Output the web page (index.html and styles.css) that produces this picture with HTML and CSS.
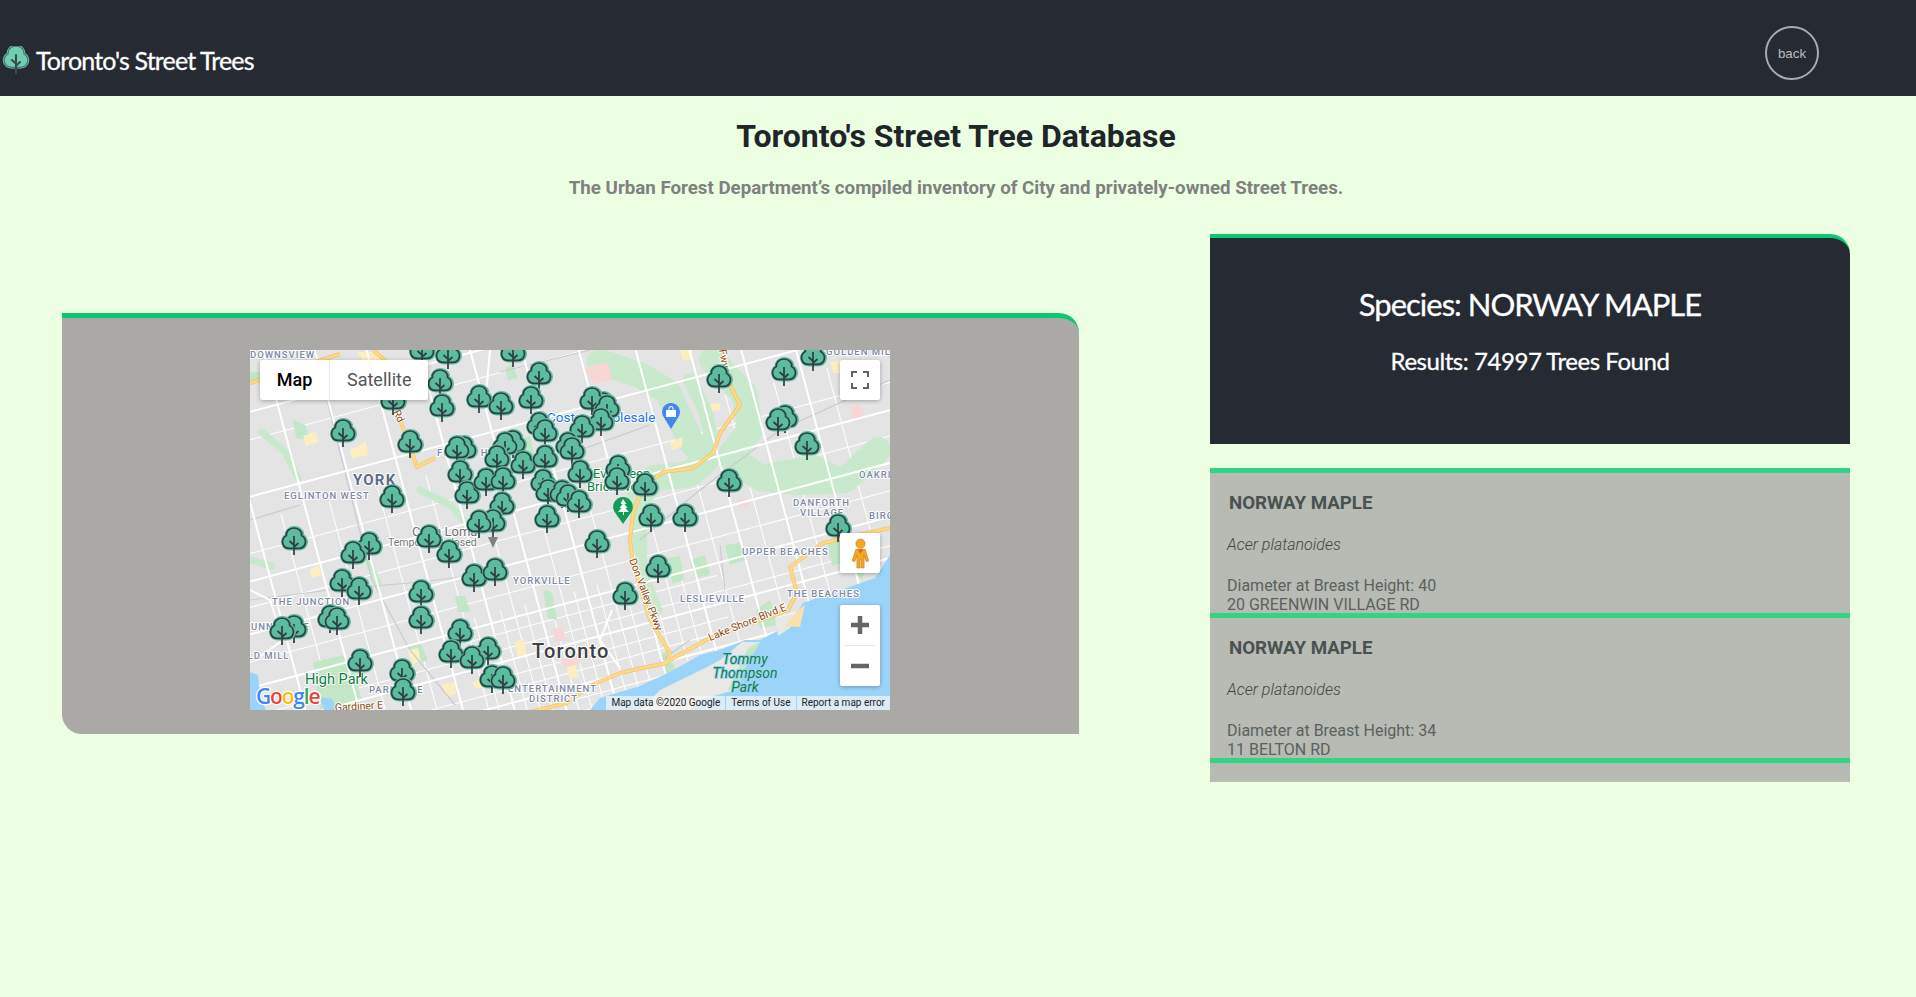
FILE: index.html
```html
<!DOCTYPE html>
<html lang="en">
<head>
<meta charset="utf-8">
<title>Toronto's Street Trees</title>
<link rel="stylesheet" href="styles.css">
</head>
<body>
<svg class="defs" width="0" height="0" aria-hidden="true">
  <defs>
    <path id="crown" d="M0-27C-5-27-8.3-23-7.6-19.4-11-17.8-12.2-14-11-10.9-10-8-7.3-6.6-4.4-6.6H4.4C7.3-6.6 10-8 11-10.9 12.2-14 11-17.8 7.6-19.4 8.3-23 5-27 0-27Z"/>
    <g id="t">
      <use href="#crown" class="tree-halo" x="0.5"/>
      <use href="#crown" class="tree-line"/>
      <path class="tree-line" d="M0-19V0M0-10-4.500-14M0-8 4.500-12"/>
    </g>
  </defs>
</svg>

<header class="topbar">
  <div class="brand">
    <svg class="brand-icon" viewBox="-13.500 -27 27 27" width="28" height="28">
      <use href="#crown" class="logo-crown"/>
      <use href="#crown" class="logo-outline"/>
      <path class="logo-line" d="M0-19V0M0-10-4.500-14M0-8 4.500-12"/>
    </svg>
    <span class="brand-name">Toronto's Street Trees</span>
  </div>
  <button class="back-btn" type="button">back</button>
</header>

<main>
  <section class="intro">
    <h1>Toronto's Street Tree Database</h1>
    <p>The Urban Forest Department’s compiled inventory of City and privately-owned Street Trees.</p>
  </section>

  <div class="columns">
    <section class="map-card">
      <div class="map">
        <svg class="map-svg" viewBox="250 350 640 360" width="640" height="360">
          <rect x="250" y="350" width="640" height="360" class="m-land"/>

          <!-- minor streets -->
          <g class="m-minor" transform="rotate(-15 570 530)">
            <path d="M100 360H1050M100 470H1050M100 522H1050M100 575H1050"/>
            <path d="M295 440V950M345 440V950M395 440V950M445 440V950M495 500V950M545 500V950M595 500V950M650 500V950M705 440V950M755 440V950M805 440V950M860 440V950"/>
            <path d="M100 628H1050M100 668H1050M100 708H1050M100 750H900"/>
            <path d="M455 590V800M482 590V800M507 590V800M532 590V800M558 590V800M582 590V800M608 590V800M635 590V800M665 590V800"/>
            <path d="M440 612H700M440 655H700M440 695H700M440 735H700"/>
          </g>

          <!-- parks and valleys -->
          <g class="m-valley">
            <path class="v-wide" d="M600 362 640 375 668 392 690 440 706 460 690 474 655 478 640 495"/>
            <path class="v-wide" d="M712 360 745 395 750 430 730 456 760 478 800 482 845 480 878 450"/>
            <path class="v-mid" d="M640 495 640 530 640 570 655 610"/>
            <path class="v-mid" d="M690 380 705 410 712 440"/>
            <path class="v-mid" d="M770 470 815 462 838 474"/>
            <path class="v-thin" d="M262 432 285 452 298 478"/>
            <path class="v-thin" d="M420 490 450 505 468 525"/>
            <path class="v-thin" d="M368 562 378 582"/>
            <path class="v-thin" d="M250 560 272 566"/>
          </g>
          <g class="m-green">
            <path d="M313 662 345 655 355 672 363 706 320 710Z"/>
            <path d="M250 372 262 372 265 380 250 385Z"/>
            <path d="M293 420 305 425 310 440 296 438Z"/>
            <path d="M455 596 465 596 470 612 458 612Z"/>
            <path d="M543 590 552 592 557 620 548 618Z"/>
            <path d="M408 646 420 642 428 660 416 664Z"/>
            <path d="M668 558 680 556 684 580 672 584Z"/>
            <path d="M725 545 740 543 745 560 730 565Z"/>
            <path d="M756 610 770 600 778 625 760 628Z"/>
            <path d="M853 570 870 560 862 580Z"/>
            <path d="M660 655 668 650 676 670 664 675Z"/>
            <path d="M828 545 838 535 850 560 832 566Z"/>
            <path d="M505 368 512 364 518 378 508 380Z"/>
            <path d="M520 440 530 436 536 462 526 464Z"/>
            <path d="M690 560 705 555 710 575 695 578Z"/>
          </g>
          <g class="m-beige">
            <path d="M303 436 316 432 318 442 306 446Z"/>
            <path d="M350 450 366 442 368 455 352 458Z"/>
            <path d="M357 352 380 352 385 362 365 364Z"/>
            <path d="M680 350 693 350 690 360 682 360Z"/>
            <path d="M670 442 683 437 682 447 672 450Z"/>
            <path d="M710 404 720 403 720 410 712 411Z"/>
            <path d="M830 362 847 360 846 373 834 373Z"/>
            <path d="M408 650 418 648 421 662 412 664Z"/>
            <path d="M515 642 524 638 526 654 518 658Z"/>
            <path d="M442 684 454 682 456 694 446 697Z"/>
            <path d="M566 664 574 660 578 676 570 680Z"/>
            <path d="M472 682 484 678 487 686 476 689Z"/>
            <path d="M310 570 318 565 322 575 312 578Z"/>
          </g>
          <g class="m-pink">
            <path d="M584 368 608 362 612 380 594 384Z"/>
            <path d="M850 408 860 404 866 418 855 422Z"/>
            <path d="M738 500 746 498 748 506 740 508Z"/>
            <path d="M552 630 562 626 566 640 556 642Z"/>
            <path d="M560 660 578 654 582 662 566 668Z"/>
          </g>

          <!-- railway -->
          <path class="m-rail" d="M315 350 332 420 372 580 410 650 455 705M250 600 330 590 420 582 480 575M500 372 590 350M640 540 700 490 780 430 890 380M580 450 650 425M250 520 300 505M720 545 725 590M690 640 655 665"/>

          <!-- major streets -->
          <g class="m-major" transform="rotate(-15 570 530)">
            <path d="M100 333H1050M100 415H1050M100 497H1050M100 548H1050M100 600H1050M100 640H1050M100 682H1050M100 722H850"/>
            <path d="M268 100V950M320 100V950M370 100V950M420 100V950M470 100V950M520 100V950M570 100V950M625 100V470M625 560V950M680 100V950M732 100V950M782 100V950M835 100V950"/>
          </g>
          <path class="m-major" d="M250 590 270 600 283 640 262 655 250 660M490 350 486 395 500 410M620 668 600 640 612 610"/>

          <!-- lake -->
          <path class="m-water" d="M890 555 875 578 835 592 803 603 797 613 783 628 760 640 745 640 720 650 700 655 670 672 640 686 600 698 590 710H890Z"/>
          <path class="m-water" d="M250 672 258 675 260 695 266 710H250Z"/>
          <path class="m-water" d="M320 697 332 699 338 710H324Z"/>
          <path class="m-spit" d="M742 642 760 642 745 668 735 690 700 700 690 710H640L660 690 705 668 720 660Z"/>
          <path class="m-green-dark" d="M748 648 760 642 745 668 738 690 728 690Z"/>
          <path class="m-spit" d="M775 618 800 612 790 628 778 636Z"/>
          <path class="m-beige-d" d="M796 612 805 605 800 627 785 626Z"/>

          <!-- highways -->
          <g class="m-hwy-o">
            <path d="M722 350 730 385 740 405 720 433 713 453 693 468 663 472 643 487 633 513 630 540 633 563 650 620 670 653 667 663 647 667 620 673 587 687 567 703 530 712"/>
            <path d="M670 660 710 638 760 620 788 610 797 593 790 567 823 543 890 528"/>
            <path d="M250 383 340 354M373 350 387 362M397 412 410 447 417 467 435 458"/>
          </g>
          <g class="m-hwy">
            <path d="M722 350 730 385 740 405 720 433 713 453 693 468 663 472 643 487 633 513 630 540 633 563 650 620 670 653 667 663 647 667 620 673 587 687 567 703 530 712"/>
            <path d="M670 660 710 638 760 620 788 610 797 593 790 567 823 543 890 528"/>
            <path d="M250 383 340 354M373 350 387 362M397 412 410 447 417 467 435 458"/>
          </g>

          <!-- labels -->
          <g class="m-area">
            <text x="250" y="358">DOWNSVIEW</text>
            <text x="284" y="499">EGLINTON WEST</text>
            <text x="437" y="456">FOREST HILL</text>
            <text x="859" y="478">OAKRIDGE</text>
            <text x="793" y="506">DANFORTH</text>
            <text x="800" y="516">VILLAGE</text>
            <text x="869" y="519">BIRCH</text>
            <text x="826" y="355">GOLDEN MILL</text>
            <text x="742" y="555">UPPER BEACHES</text>
            <text x="680" y="602">LESLIEVILLE</text>
            <text x="787" y="597">THE BEACHES</text>
            <text x="513" y="584">YORKVILLE</text>
            <text x="272" y="605">THE JUNCTION</text>
            <text x="244" y="630">RUNNYMEDE</text>
            <text x="240" y="659">OLD MILL</text>
            <text x="369" y="693">PARKDALE</text>
            <text x="508" y="692">ENTERTAINMENT</text>
            <text x="529" y="702">DISTRICT</text>
          </g>
          <text class="m-york" x="353" y="485">YORK</text>
          <text class="m-poi-gray" x="412" y="536">Casa Loma</text>
          <text class="m-temp" x="388" y="546">Temporarily closed</text>
          <text class="m-blue" x="547" y="422">Costco Wholesale</text>
          <text class="m-park" x="593" y="478">Evergreen</text>
          <text class="m-park" x="587" y="491">Brick Works</text>
          <text class="m-park-l" x="305" y="684">High Park</text>
          <text class="m-toronto" x="532" y="658">Toronto</text>
          <g class="m-ital">
            <text x="745" y="664">Tommy</text>
            <text x="745" y="678">Thompson</text>
            <text x="745" y="692">Park</text>
          </g>
          <g class="m-road">
            <text transform="translate(629 560) rotate(69)">Don Valley Pkwy</text>
            <text transform="translate(710 641) rotate(-22)">Lake Shore Blvd E</text>
            <text transform="translate(393 412) rotate(65)">Rd</text>
            <text transform="translate(719 350) rotate(80)">Fwy</text>
            <text transform="translate(335 711) rotate(-3)">Gardiner E</text>
          </g>

          <!-- place pins -->
          <path class="pin-blue" d="M671 403a9 9 0 0 1 8 13l-8 13-8-13a9 9 0 0 1 8-13Z"/>
          <path class="pin-glyph" d="M666 410h10v7h-10ZM668.500 410v-1.500a2.500 2.500 0 0 1 5 0V410h-1v-1.500a1.500 1.500 0 0 0-3 0V410Z"/>
          <path class="pin-green" d="M623 497a10 10 0 0 1 9 14l-9 13-9-13a10 10 0 0 1 9-14Z"/>
          <path class="pin-glyph" d="M623 499l3.500 5h-2l3 4h-2l3.500 4h-5v3h-1v-3h-5l3.500-4h-2l3-4h-2Z"/>
          <path class="pin-gray" d="M488 537h10l-5 11Z"/>

          <!-- trees -->
          <g class="trees">
            <use href="#t" x="422" y="365"/><use href="#t" x="448" y="369"/><use href="#t" x="513" y="367"/>
            <use href="#t" x="539" y="390"/><use href="#t" x="393" y="415"/><use href="#t" x="440" y="397"/>
            <use href="#t" x="442" y="422"/><use href="#t" x="479" y="413"/><use href="#t" x="501" y="420"/>
            <use href="#t" x="531" y="414"/><use href="#t" x="343" y="447"/><use href="#t" x="410" y="458"/>
            <use href="#t" x="464" y="464"/><use href="#t" x="457" y="464"/><use href="#t" x="603" y="420"/>
            <use href="#t" x="592" y="415"/><use href="#t" x="607" y="423"/><use href="#t" x="601" y="436"/>
            <use href="#t" x="539" y="440"/><use href="#t" x="545" y="447"/><use href="#t" x="582" y="443"/>
            <use href="#t" x="513" y="458"/><use href="#t" x="505" y="460"/><use href="#t" x="568" y="460"/>
            <use href="#t" x="572" y="465"/><use href="#t" x="497" y="473"/><use href="#t" x="523" y="479"/>
            <use href="#t" x="545" y="473"/><use href="#t" x="460" y="488"/><use href="#t" x="467" y="509"/>
            <use href="#t" x="486" y="496"/><use href="#t" x="503" y="495"/><use href="#t" x="502" y="520"/>
            <use href="#t" x="543" y="497"/><use href="#t" x="548" y="507"/><use href="#t" x="562" y="508"/>
            <use href="#t" x="568" y="512"/><use href="#t" x="547" y="533"/><use href="#t" x="580" y="488"/>
            <use href="#t" x="579" y="518"/><use href="#t" x="618" y="483"/><use href="#t" x="617" y="495"/>
            <use href="#t" x="645" y="501"/><use href="#t" x="651" y="532"/><use href="#t" x="685" y="532"/>
            <use href="#t" x="719" y="393"/><use href="#t" x="784" y="386"/><use href="#t" x="813" y="371"/>
            <use href="#t" x="785" y="433"/><use href="#t" x="778" y="436"/><use href="#t" x="807" y="460"/>
            <use href="#t" x="729" y="497"/><use href="#t" x="838" y="542"/><use href="#t" x="392" y="513"/>
            <use href="#t" x="294" y="555"/><use href="#t" x="369" y="560"/><use href="#t" x="353" y="569"/>
            <use href="#t" x="342" y="597"/><use href="#t" x="359" y="605"/><use href="#t" x="421" y="608"/>
            <use href="#t" x="421" y="634"/><use href="#t" x="474" y="592"/><use href="#t" x="495" y="586"/>
            <use href="#t" x="449" y="568"/><use href="#t" x="429" y="553"/><use href="#t" x="493" y="537"/>
            <use href="#t" x="479" y="538"/><use href="#t" x="330" y="633"/><use href="#t" x="337" y="635"/>
            <use href="#t" x="294" y="643"/><use href="#t" x="282" y="645"/><use href="#t" x="460" y="647"/>
            <use href="#t" x="488" y="665"/><use href="#t" x="451" y="668"/><use href="#t" x="472" y="674"/>
            <use href="#t" x="492" y="693"/><use href="#t" x="503" y="694"/><use href="#t" x="360" y="677"/>
            <use href="#t" x="402" y="687"/><use href="#t" x="403" y="706"/><use href="#t" x="597" y="558"/>
            <use href="#t" x="658" y="583"/><use href="#t" x="625" y="610"/>
          </g>

          <!-- google logo -->
          <text class="m-google" x="256" y="704"><tspan class="g-b">G</tspan><tspan class="g-r">o</tspan><tspan class="g-y">o</tspan><tspan class="g-b">g</tspan><tspan class="g-g">l</tspan><tspan class="g-r">e</tspan></text>
        </svg>

        <div class="map-type">
          <span class="type-btn type-active">Map</span>
          <span class="type-btn">Satellite</span>
        </div>
        <button class="map-ctl fullscreen" type="button" aria-label="Toggle fullscreen">
          <svg viewBox="0 0 18 18" width="18" height="18"><path class="ctl-line" d="M1 6V1H6M12 1H17V6M17 12V17H12M6 17H1V12"/></svg>
        </button>
        <button class="map-ctl pegman" type="button" aria-label="Street View">
          <svg viewBox="0 0 18 30" width="19" height="31">
            <circle class="peg" cx="9" cy="5.500" r="4.500"/>
            <path class="peg" d="M4.500 11H13.500L17 22 14.500 23 12.500 17V29H9.500V21H8.500V29H5.500V17L3.500 23 1 22Z"/>
            <path class="peg-v" d="M6 11 9 15 12 11Z"/>
          </svg>
        </button>
        <div class="map-ctl zoom-ctl">
          <svg viewBox="0 0 40 81" width="40" height="81">
            <path class="zoom-mark" d="M20 11V29M11 20H29"/>
            <path class="zoom-sep" d="M5 40.500H35"/>
            <path class="zoom-mark" d="M11 61H29"/>
          </svg>
        </div>
        <div class="attribution">
          <span class="attr-data">Map data ©2020 Google</span>
          <span class="attr-terms">Terms of Use</span>
          <span class="attr-report">Report a map error</span>
        </div>
      </div>
    </section>

    <aside class="side">
      <section class="summary">
        <h2>Species: NORWAY MAPLE</h2>
        <h3>Results: 74997 Trees Found</h3>
      </section>
      <div class="results">
        <article class="tree-row">
          <h4>NORWAY MAPLE</h4>
          <p class="latin">Acer platanoides</p>
          <p class="facts">Diameter at Breast Height: 40<br>20 GREENWIN VILLAGE RD</p>
        </article>
        <article class="tree-row">
          <h4>NORWAY MAPLE</h4>
          <p class="latin">Acer platanoides</p>
          <p class="facts">Diameter at Breast Height: 34<br>11 BELTON RD</p>
        </article>
        <div class="results-end"></div>
      </div>
    </aside>
  </div>
</main>
</body>
</html>
```
FILE: styles.css
```css
* { box-sizing: border-box; }
html, body { margin: 0; padding: 0; }
body {
  background: #ecffe3;
  font-family: Roboto, "Liberation Sans", sans-serif;
  color: #212529;
  height: 997px;
  overflow: hidden;
}
.defs { position: absolute; }

.topbar {
  height: 96px;
  background: #262a32;
  display: flex;
  align-items: flex-start;
  justify-content: space-between;
  padding: 26px 97px 0 2px;
}
.brand { display: flex; align-items: center; gap: 6px; margin-top: 19px; }
.brand-icon { display: block; flex: none; }
.brand-name {
  font-family: Lato, "Open Sans", sans-serif;
  font-size: 25px;
  line-height: 30px;
  letter-spacing: -.85px;
  color: #fff;
  -webkit-text-stroke: .3px #fff;
}
.logo-crown { fill: #6fcfb0; stroke: #6fcfb0; stroke-width: 2.5; }
.logo-outline { fill: none; stroke: #47616a; stroke-width: 1; }
.logo-line { fill: none; stroke: #3a4a50; stroke-width: 2; }
.back-btn {
  width: 54px;
  height: 54px;
  border-radius: 50%;
  background: transparent;
  border: 2px solid #a9acae;
  color: #b9bcbe;
  font-family: "Liberation Sans", Arial, sans-serif;
  font-size: 13.33px;
  padding: 0;
}

.intro { text-align: center; padding: 21px 4px 0 0; }
.intro h1 {
  margin: 0;
  font-size: 32px;
  line-height: 38px;
  font-weight: 700;
  color: #212529;
}
.intro p {
  margin: 20px 0 0;
  font-size: 18.72px;
  line-height: 27px;
  font-weight: 700;
  color: #808080;
}

.columns {
  display: flex;
  align-items: flex-start;
  gap: 131px;
  padding: 0 0 0 62px;
  margin-top: 32px;
}

.map-card {
  width: 1017px;
  height: 421px;
  margin-top: 79px;
  background: #aaa9a6;
  border-top: 5px solid #0ac86f;
  border-radius: 0 20px 0 20px;
  padding: 32px 0 0 188px;
}
.map {
  position: relative;
  width: 640px;
  height: 360px;
  overflow: hidden;
}
.map-svg { display: block; }

.m-land { fill: #e4e4e4; }
.m-minor path { fill: none; stroke: #fff; stroke-width: 1; }
.m-major path, path.m-major { fill: none; stroke: #fff; stroke-width: 2; }
.m-green path { fill: #c2e7c6; }
.m-valley path { fill: none; stroke: #c8e9cb; stroke-linejoin: round; stroke-linecap: round; }
.v-wide { stroke-width: 26; }
.v-mid { stroke-width: 14; }
.v-thin { stroke-width: 7; }
.m-beige path { fill: #fdeec2; }
.m-pink path { fill: #f8d6d6; }
.m-rail { fill: none; stroke: #cacbd0; stroke-width: 1.2; }
.m-water { fill: #9bd3f9; }
.m-spit { fill: #e8e8e4; }
.m-green-dark { fill: #c2e7c6; }
.m-beige-d { fill: #f7e2ad; }
.m-hwy-o path { fill: none; stroke: #f1c469; stroke-width: 4; stroke-linejoin: round; }
.m-hwy path { fill: none; stroke: #fed98a; stroke-width: 2.6; stroke-linejoin: round; }

.map-svg text {
  font-family: Roboto, sans-serif;
  paint-order: stroke;
  stroke: #fff;
  stroke-width: 2px;
  stroke-linejoin: round;
}
.m-area text { font-size: 9.5px; font-weight: 500; letter-spacing: 1px; fill: #7c88a4; }
.map-svg .m-york { font-size: 15px; font-weight: 700; letter-spacing: 1.2px; fill: #5d6c88; }
.map-svg .m-poi-gray { font-size: 13px; fill: #6f7072; }
.map-svg .m-temp { font-size: 10.5px; fill: #757575; }
.map-svg .m-blue { font-size: 13.5px; fill: #1a73e8; }
.map-svg .m-park { font-size: 13px; fill: #0d8043; }
.map-svg .m-park-l { font-size: 14.500px; fill: #0d8043; }
.map-svg .m-toronto { font-size: 20px; font-weight: 500; letter-spacing: 1.2px; fill: #3c4043; }
.m-ital text { font-size: 14px; font-style: italic; fill: #0d8043; text-anchor: middle; stroke: #9bd3f9; }
.m-road text { font-size: 10.5px; fill: #8a4a14; }

.pin-blue { fill: #4285f4; }
.pin-green { fill: #0f9d58; }
.pin-gray { fill: #7f8388; }
.pin-glyph { fill: #fff; }

.tree-halo { fill: #5cbd9e; stroke: #5cbd9e; stroke-width: 4; }
.tree-line { fill: none; stroke: #2f3d44; stroke-width: 1.7; }

.map-svg .m-google {
  font-family: "Open Sans", sans-serif;
  font-size: 21px;
  font-weight: 600;
  letter-spacing: -1.2px;
  stroke-width: 2.5px;
}
.g-b { fill: #4285f4; }
.g-r { fill: #ea4335; }
.g-y { fill: #fbbc05; }
.g-g { fill: #34a853; }

.map-type {
  position: absolute;
  left: 10px;
  top: 10px;
  display: flex;
  height: 40px;
  background: #fff;
  border-radius: 2px;
  box-shadow: 0 1px 4px rgba(0, 0, 0, .3);
}
.type-btn {
  font-size: 18px;
  line-height: 40px;
  color: #565656;
  padding: 0 17px;
}
.type-active {
  color: #000;
  font-weight: 500;
  width: 70px;
  text-align: center;
  padding: 0;
  border-right: 1px solid #e6e6e6;
}
.map-ctl {
  position: absolute;
  left: 590px;
  width: 40px;
  background: #fff;
  border: 0;
  padding: 0;
  border-radius: 2px;
  box-shadow: 0 1px 4px rgba(0, 0, 0, .3);
  display: flex;
  align-items: center;
  justify-content: center;
}
.fullscreen { top: 10px; height: 40px; }
.pegman { top: 183px; height: 40px; }
.zoom-ctl { top: 255px; height: 81px; }
.ctl-line { fill: none; stroke: #666; stroke-width: 2; }
.peg { fill: #f5a623; stroke: #a8761a; stroke-width: .5; }
.peg-v { fill: #e2622b; }
.zoom-mark { fill: none; stroke: #666; stroke-width: 4.500; }
.zoom-sep { stroke: #e6e6e6; stroke-width: 1; }

.attribution {
  position: absolute;
  right: 0;
  bottom: 0;
  display: flex;
  gap: 1px;
  height: 14px;
  font-size: 10px;
  line-height: 14px;
  color: #222;
}
.attribution span {
  background: rgba(245, 245, 245, .72);
  padding: 0 5px;
  white-space: nowrap;
}

.side { width: 640px; }
.summary {
  height: 210px;
  background: #262a32;
  border-top: 4px solid #0ac86f;
  border-top-right-radius: 20px;
  text-align: center;
  color: #fff;
  font-family: Lato, "Open Sans", sans-serif;
  padding-top: 46px;
}
.summary h2 {
  margin: 0;
  font-size: 31px;
  line-height: 40px;
  font-weight: 400;
  letter-spacing: -1px;
  -webkit-text-stroke: .3px #fff;
}
.summary h3 {
  margin: 22px 0 0;
  font-size: 24px;
  line-height: 30px;
  font-weight: 400;
  letter-spacing: -.45px;
  -webkit-text-stroke: .3px #fff;
}

.results { margin-top: 24px; background: #b7bbb3; }
.tree-row {
  height: 145px;
  border-top: 5px solid #2fd585;
  padding: 18px 0 0 17px;
  overflow: hidden;
}
.tree-row h4 {
  margin: 0 0 0 2px;
  font-size: 18.72px;
  line-height: 24px;
  font-weight: 700;
  color: #485250;
}
.latin {
  margin: 18px 0 0;
  font-size: 16px;
  line-height: 24px;
  font-style: italic;
  font-weight: 300;
  color: #3e4644;
}
.facts {
  margin: 19px 0 0;
  font-size: 16px;
  line-height: 19px;
  color: #596260;
}
.results-end { height: 24px; border-top: 5px solid #2fd585; }
```
